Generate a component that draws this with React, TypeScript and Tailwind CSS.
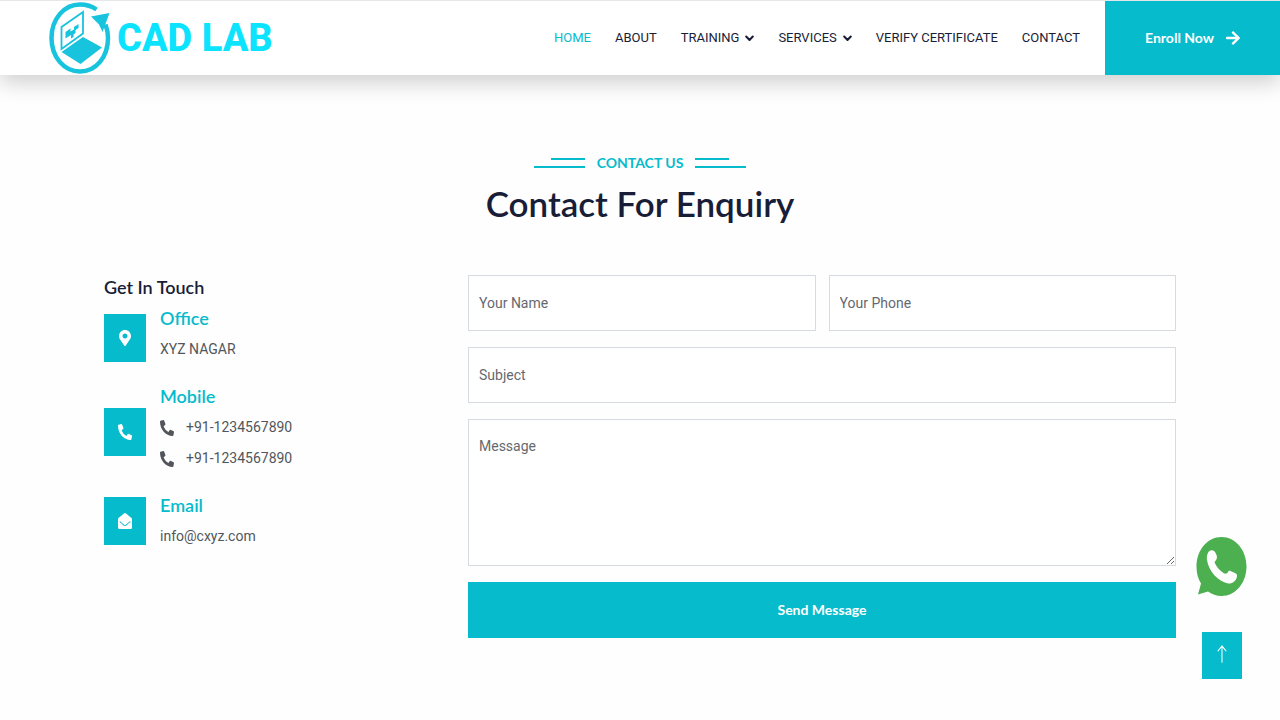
import React, { useState } from 'react';
import { FaArrowRight, FaEnvelopeOpen, FaMapMarkerAlt, FaPhoneAlt } from 'react-icons/fa';
import { BsArrowUp } from 'react-icons/bs';

interface NavItem {
    label: string;
    href: string;
    hasMenu?: boolean;
}

const navItems: NavItem[] = [
    { label: 'HOME', href: '#home' },
    { label: 'ABOUT', href: '#about' },
    { label: 'TRAINING', href: '#training', hasMenu: true },
    { label: 'SERVICES', href: '#services', hasMenu: true },
    { label: 'VERIFY CERTIFICATE', href: '#verify' },
    { label: 'CONTACT', href: '#contact' },
];

const fieldClass = 'block w-full border border-[#d5dbe0] bg-white px-2.5 text-sm text-[#55595f] placeholder:text-[#65696f] outline-none focus:border-[#06bbcc]';

const LogoMark: React.FC = () => (
    <svg width="62" height="72" viewBox="0 0 62 72" fill="none" aria-hidden="true">
        <path d="M47.500 7.500C42.500 4 37 2.500 31 2.500C15 2.500 2.500 17 2.500 36S15 69.500 31 69.500S59 55 59 36C59 31 58 26.500 56.500 22.500" stroke="#17c3dd" strokeWidth="4.500" />
        <path d="M12.500 25L34 10V31.500L12.500 47Z" stroke="#17c3dd" strokeWidth="1.800" />
        <path d="M16.500 30L21.500 26.500V29.500L25 27.500V25L29.500 22V26L26.500 28V31L24.500 32.500V35L22 36.500V33L16.500 36.500Z" fill="#17c3dd" />
        <path d="M12.500 50L34 35L53 45.500L31.500 62Z" fill="#17c3dd" />
        <path d="M42 14.500L60.500 11L53.500 30L50 22.500Z" fill="#17c3dd" />
    </svg>
);

const Chevron: React.FC = () => (
    <svg width="9" height="7" viewBox="0 0 9 7" fill="none" aria-hidden="true">
        <path d="M1.200 1.500L4.500 5L7.800 1.500" stroke="currentColor" strokeWidth="2" strokeLinecap="round" strokeLinejoin="round" />
    </svg>
);

const Header: React.FC = () => (
    <header className="relative flex min-h-[75px] items-stretch border-t border-gray-200 bg-white shadow-[0_8px_20px_rgba(0,0,0,0.18)]">
        <a href="#home" className="flex items-center gap-1.5 pl-[49px]">
            <LogoMark />
            <span className="text-[38px] leading-10 font-extrabold text-[#0be3ff]">CAD LAB</span>
        </a>
        <nav className="ml-auto flex items-center gap-6 pr-[25px]">
            {navItems.map((item, index) => (
                <a
                    key={item.label}
                    href={item.href}
                    className={`flex items-center gap-1.5 text-[13px] whitespace-nowrap hover:text-[#06bbcc] ${index === 0 ? 'text-[#06bbcc]' : 'text-[#181d38]'}`}
                >
                    {item.label}
                    {item.hasMenu && <Chevron />}
                </a>
            ))}
        </nav>
        <a href="#enroll" className="flex items-center gap-3 bg-[#06bbcc] px-10 font-[Lato,sans-serif] text-sm font-bold text-white">
            Enroll Now
            <FaArrowRight className="h-4 w-3.5" preserveAspectRatio="none" />
        </a>
    </header>
);

interface ContactRowProps {
    title: string;
    icon: React.ReactNode;
    children: React.ReactNode;
}

const ContactRow: React.FC<ContactRowProps> = ({ title, icon, children }) => (
    <div className="group flex items-center gap-3.5">
        <div className="flex h-12 w-[42px] shrink-0 items-center justify-center bg-[#06bbcc] text-white">{icon}</div>
        <div className="pb-2 group-last:pb-0">
            <h3 className="font-[Lato,sans-serif] text-lg leading-[31px] font-semibold text-[#06bbcc]">{title}</h3>
            {children}
        </div>
    </div>
);

const PhoneLine: React.FC<{ number: string }> = ({ number }) => (
    <p className="flex items-center gap-3 text-sm leading-[31px] text-[#52565b]">
        <FaPhoneAlt className="h-4 w-3.5" preserveAspectRatio="none" />
        {number}
    </p>
);

const ContactForm: React.FC = () => {
    const [message, setMessage] = useState('');

    return (
        <form className="space-y-4" onSubmit={e => e.preventDefault()}>
            <div className="grid grid-cols-2 gap-[13px]">
                <input type="text" aria-label="Your Name" placeholder="Your Name" className={`${fieldClass} h-14`} />
                <input type="tel" aria-label="Your Phone" placeholder="Your Phone" className={`${fieldClass} h-14`} />
            </div>
            <input type="text" aria-label="Subject" placeholder="Subject" className={`${fieldClass} h-14`} />
            <textarea
                aria-label="Message"
                placeholder="Message"
                value={message}
                onChange={e => setMessage(e.target.value)}
                className={`${fieldClass} h-[147px] resize py-4`}
            />
            <button type="submit" className="h-14 w-full bg-[#06bbcc] font-[Lato,sans-serif] text-sm font-bold text-white hover:bg-[#05a6b5]">
                Send Message
            </button>
        </form>
    );
};

const App: React.FC = () => (
    <div className="min-h-screen bg-[#fefefe] font-[Roboto,sans-serif]">
        <Header />

        <main className="px-[104px] pt-[78px] pb-20">
            <div className="text-center font-[Lato,sans-serif]">
                <div className="flex items-center justify-center gap-3">
                    <span className="flex flex-col items-end gap-1.5">
                        <span className="h-0.5 w-[34px] bg-[#06bbcc]"></span>
                        <span className="h-0.5 w-[51px] bg-[#06bbcc]"></span>
                    </span>
                    <h2 className="text-sm leading-5 font-bold text-[#06bbcc]">CONTACT US</h2>
                    <span className="flex flex-col items-start gap-1.5">
                        <span className="h-0.5 w-[34px] bg-[#06bbcc]"></span>
                        <span className="h-0.5 w-[51px] bg-[#06bbcc]"></span>
                    </span>
                </div>
                <h1 className="mt-1.5 text-[35px] leading-12 font-semibold text-[#181d38]">Contact For Enquiry</h1>
            </div>

            <div className="mt-12 grid grid-cols-[1fr_2fr] gap-2.5">
                <section>
                    <h2 className="font-[Lato,sans-serif] text-lg leading-6 font-semibold text-[#181d38]">Get In Touch</h2>
                    <div className="mt-1 space-y-2">
                        <ContactRow title="Office" icon={<FaMapMarkerAlt className="h-4 w-3" preserveAspectRatio="none" />}>
                            <p className="text-sm leading-[31px] text-[#52565b]">XYZ NAGAR</p>
                        </ContactRow>
                        <ContactRow title="Mobile" icon={<FaPhoneAlt className="h-4 w-3.5" preserveAspectRatio="none" />}>
                            <PhoneLine number="+91-1234567890" />
                            <PhoneLine number="+91-1234567890" />
                        </ContactRow>
                        <ContactRow title="Email" icon={<FaEnvelopeOpen className="h-4 w-3.5" preserveAspectRatio="none" />}>
                            <p className="text-sm leading-[31px] text-[#52565b]">info@cxyz.com</p>
                        </ContactRow>
                    </div>
                </section>
                <ContactForm />
            </div>
        </main>

        {/* Floating shortcuts */}
        <div className="fixed right-[33px] bottom-[41px] flex flex-col items-center gap-9">
            <a href="#whatsapp" aria-label="WhatsApp">
                <svg width="51" height="59" viewBox="0 0 51 59" aria-hidden="true">
                    <path d="M25.500 0C39.500 0 50.500 13 50.500 29.500S39.500 59 25.500 59C20.500 59 15.500 57 12 54.500L2 57.500L5 46.500C2 42 0.500 36 0.500 29.500C0.500 13 11.500 0 25.500 0Z" fill="#4caf50" />
                    <path d="M14.500 13.500C11.500 14.500 10.500 19 11 23C12.500 34 22 44.500 32 46.500C36.500 47 41 43.500 41 38.500C41 37 40 36.500 39 36L34.500 34C33 33.500 32.500 34 32 35C31 37 29 37 27.500 36C23.500 33.500 20 29.500 18.500 25C21 22.500 21.500 20.500 20.500 18C19.500 15 18 12.500 14.500 13.500Z" fill="#fefefe" />
                </svg>
            </a>
            <a href="#home" aria-label="Back to top" className="flex h-[47px] w-10 items-center justify-center bg-[#06bbcc] pb-1 text-white">
                <BsArrowUp className="h-5 w-4" preserveAspectRatio="none" />
            </a>
        </div>
    </div>
);

export default App;
